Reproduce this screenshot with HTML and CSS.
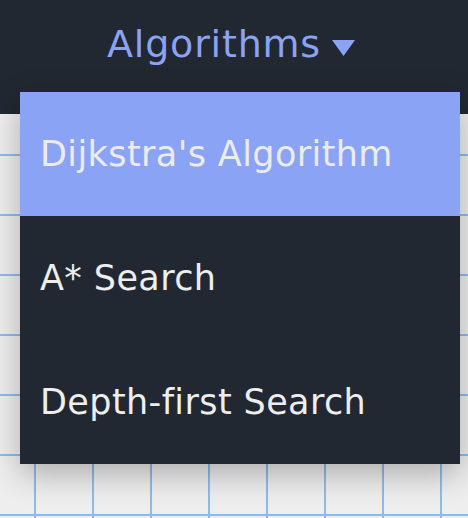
FILE: index.html
```html
<!DOCTYPE html>
<html lang="en">
<head>
<meta charset="utf-8">
<title>Algorithms</title>
<link rel="stylesheet" href="styles.css">
</head>
<body>
<nav class="navbar">
  <div class="nav-item">
    <span class="nav-label">Algorithms</span>
    <svg class="caret" width="23" height="16" viewBox="0 0 23 16"><polygon points="0,0 23,0 11.5,16" fill="#8ba3f4"/></svg>
  </div>
</nav>
<main class="board"></main>
<ul class="dropdown">
  <li class="dropdown-item active">Dijkstra's Algorithm</li>
  <li class="dropdown-item">A* Search</li>
  <li class="dropdown-item">Depth-first Search</li>
</ul>
</body>
</html>
```
FILE: styles.css
```css
html, body {
  margin: 0;
  padding: 0;
  height: 100%;
}
body {
  display: flex;
  flex-direction: column;
  background: #eeeeee;
  font-family: "DejaVu Sans", "Liberation Sans", sans-serif;
  overflow: hidden;
}
.navbar {
  height: 114px;
  flex: none;
  background: #222831;
  display: flex;
  justify-content: center;
  align-items: flex-start;
  box-sizing: border-box;
  padding-top: 25px;
  padding-right: 6px;
}
.nav-item {
  display: flex;
  align-items: center;
}
.nav-label {
  color: #8ba3f4;
  font-size: 38px;
  line-height: 38px;
  letter-spacing: 0.8px;
}
.caret {
  margin-left: 11px;
  margin-top: 8px;
}
.board {
  flex: 1;
  background-color: #eeeeee;
  background-image:
    linear-gradient(to right, #8fbbe9 2px, transparent 2px),
    linear-gradient(to bottom, #8fbbe9 2px, transparent 2px);
  background-size: 58px 60px, 58px 60px;
  background-position: 34px 0, 0 40px;
}
.dropdown {
  position: absolute;
  left: 20px;
  top: 92px;
  width: 440px;
  margin: 0;
  padding: 0;
  list-style: none;
  background: #222831;
  box-shadow: 0 10px 30px rgba(0, 0, 0, 0.28);
}
.dropdown-item {
  height: 124px;
  display: flex;
  align-items: center;
  padding-left: 20px;
  color: #eeeeee;
  font-size: 35px;
  letter-spacing: 0.4px;
}
.dropdown-item.active {
  background: #8ba3f4;
  color: #ececec;
}
```
